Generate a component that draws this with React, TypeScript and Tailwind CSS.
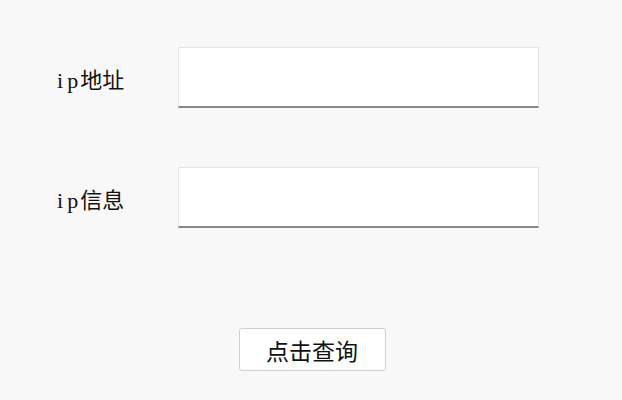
export default function App() {
  return (
    <main className="min-h-[400px] w-full bg-[#f8f8f8] pt-[47px] font-['Liberation_Serif','Noto_Sans_CJK_SC',serif] text-[#111]">
      <div className="flex flex-col gap-[59px]">
        <div className="flex items-center pl-[57px]">
          <label className="w-[121px] pt-[6px] text-[22px] leading-none">
            <span className="mr-[4px]">i</span>
            <span className="mr-[2px]">p</span>地址
          </label>
          <input className="h-[61px] w-[361px] border border-[#e4e4e4] border-b-2 border-b-[#888] bg-white px-2 outline-none" />
        </div>
        <div className="flex items-center pl-[57px]">
          <label className="w-[121px] pt-[6px] text-[22px] leading-none">
            <span className="mr-[4px]">i</span>
            <span className="mr-[2px]">p</span>信息
          </label>
          <input className="h-[61px] w-[361px] border border-[#e4e4e4] border-b-2 border-b-[#888] bg-white px-2 outline-none" />
        </div>
      </div>
      <div className="mt-[100px] flex justify-center">
        <button className="ml-[2px] h-[43px] w-[147px] rounded-[3px] border border-[#cfcfcf] bg-[#fefefe] pt-[2px] font-['Noto_Sans_CJK_SC',sans-serif] text-[23px] leading-none text-[#111]">
          点击查询
        </button>
      </div>
    </main>
  );
}
